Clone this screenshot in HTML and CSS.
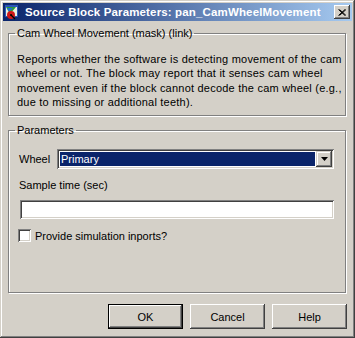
FILE: index.html
```html
<!DOCTYPE html>
<html>
<head>
<meta charset="utf-8">
<title>Source Block Parameters</title>
<link rel="stylesheet" href="styles.css">
</head>
<body>
<div class="window">
  <div class="titlebar">
    <svg class="app-icon" width="16" height="16" viewBox="0 0 16 16">
      <rect x="0.5" y="0.5" width="14" height="13" fill="#2a55b8" stroke="#0f2a6e"/>
      <rect x="2" y="3" width="11" height="9" fill="#e8f0e0"/>
      <polygon points="2,3 12,3 6,10" fill="#2e9a3a"/>
      <polygon points="3,4 9,4 5,8" fill="#1f6fd0"/>
      <circle cx="7" cy="11" r="4" fill="#d01818"/>
      <path d="M7 11 L11 15" stroke="#000" stroke-width="1.2"/>
      <circle cx="7" cy="11" r="1" fill="#000"/>
    </svg>
    <span class="title">Source Block Parameters: pan_CamWheelMovement</span>
    <button class="close" aria-label="Close">
      <svg width="8" height="7" viewBox="0 0 8 7"><path d="M0.5 0.5 L7 6.5 M1.5 0.5 L8 6.5 M7 0.5 L0.5 6.5 M8 0.5 L1.5 6.5" stroke="#000" stroke-width="1"/></svg>
    </button>
  </div>
  <div class="content">
    <fieldset class="group desc">
      <legend>Cam Wheel Movement (mask) (link)</legend>
      <p class="desc-text">Reports whether the software is detecting movement of the cam<br>wheel or not. The block may report that it senses cam wheel<br>movement even if the block cannot decode the cam wheel (e.g.,<br>due to missing or additional teeth).</p>
    </fieldset>
    <fieldset class="group params">
      <legend>Parameters</legend>
      <div class="wheel-row">
        <span class="wheel-label">Wheel</span>
        <div class="select">
          <span class="sel-text">Primary</span>
          <span class="arrow">
            <svg width="7" height="4" viewBox="0 0 7 4"><polygon points="0,0 7,0 3.5,4" fill="#000"/></svg>
          </span>
        </div>
      </div>
      <div class="field-label">Sample time (sec)</div>
      <div class="textbox"></div>
      <div class="check-row">
        <span class="checkbox"></span>
        <span class="check-label">Provide simulation inports?</span>
      </div>
    </fieldset>
    <div class="buttons">
      <button class="btn default">OK</button>
      <button class="btn">Cancel</button>
      <button class="btn">Help</button>
    </div>
  </div>
</div>
</body>
</html>
```
FILE: styles.css
```css
html, body {
  margin: 0;
  padding: 0;
  background: #d4d0c8;
}
body {
  font-family: "Liberation Sans", Arial, sans-serif;
  font-size: 11px;
  color: #000;
}
.window {
  width: 355px;
  height: 338px;
  box-sizing: border-box;
  padding: 3px;
  background: #d4d0c8;
  box-shadow: inset -1px -1px #404040, inset 1px 1px #d4d0c8, inset -2px -2px #808080, inset 2px 2px #fff;
  display: flex;
  flex-direction: column;
}
.titlebar {
  height: 18px;
  flex: none;
  display: flex;
  align-items: center;
  padding-left: 1px;
  background: linear-gradient(to right, #0a246a, #a6caf0);
}
.app-icon {
  flex: none;
  margin-right: 5px;
}
.title {
  color: #fff;
  font-weight: bold;
  font-size: 11.5px;
  letter-spacing: 0.15px;
  white-space: nowrap;
}
.close {
  margin-left: auto;
  margin-right: 2px;
  width: 16px;
  height: 14px;
  padding: 0;
  border: none;
  background: #d4d0c8;
  box-shadow: inset -1px -1px #404040, inset 1px 1px #fff, inset -2px -2px #808080;
  display: flex;
  align-items: center;
  justify-content: center;
}
.close svg {
  display: block;
  margin-left: -1px;
}
.content {
  flex: 1;
  display: flex;
  flex-direction: column;
  padding: 0 6px 0 5px;
}
.group {
  margin: 0;
  min-width: 0;
  border: 1px solid #808080;
  box-shadow: inset 1px 1px #fff, 1px 1px #fff;
}
.group legend {
  line-height: 13px;
  padding: 0 2px;
}
.desc {
  margin-top: 6px;
  padding: 12px 8px 6px 8px;
}
.desc legend {
  margin-left: -2px;
}
.desc-text {
  margin: 0;
  line-height: 14.3px;
  letter-spacing: 0.22px;
  white-space: nowrap;
}
.params {
  margin-top: 8px;
  padding: 12px 11px 50px 10px;
}
.params legend {
  margin-left: -4px;
}
.wheel-row {
  display: flex;
  align-items: center;
  height: 20px;
}
.wheel-label {
  width: 38px;
  flex: none;
}
.select {
  flex: 1;
  height: 20px;
  box-sizing: border-box;
  padding: 2px;
  background: #fff;
  box-shadow: inset 1px 1px #808080, inset -1px -1px #fff, inset 2px 2px #404040, inset -2px -2px #d4d0c8;
  display: flex;
}
.sel-text {
  flex: 1;
  margin: 1px;
  background: #0a246a;
  color: #fff;
  line-height: 14px;
  padding-left: 1px;
}
.arrow {
  width: 16px;
  height: 16px;
  flex: none;
  background: #d4d0c8;
  box-shadow: inset -1px -1px #404040, inset 1px 1px #d4d0c8, inset -2px -2px #808080, inset 2px 2px #fff;
  display: flex;
  align-items: center;
  justify-content: center;
}
.arrow svg {
  display: block;
}
.field-label {
  margin-top: 10px;
  line-height: 13px;
}
.textbox {
  margin-top: 8px;
  margin-left: 1px;
  height: 19px;
  background: #fff;
  box-shadow: inset 1px 1px #808080, inset -1px -1px #fff, inset 2px 2px #404040, inset -2px -2px #d4d0c8;
}
.check-row {
  margin-top: 10px;
  margin-left: -1px;
  display: flex;
  align-items: center;
  height: 13px;
}
.checkbox {
  width: 13px;
  height: 13px;
  flex: none;
  background: #fff;
  box-shadow: inset 1px 1px #808080, inset -1px -1px #fff, inset 2px 2px #404040, inset -2px -2px #d4d0c8;
  margin-right: 4px;
}
.buttons {
  margin-top: 11px;
  margin-right: -1px;
  display: flex;
  justify-content: flex-end;
  gap: 7px;
}
.btn {
  width: 75px;
  height: 25px;
  padding: 0;
  border: none;
  background: #d4d0c8;
  font-family: "Liberation Sans", Arial, sans-serif;
  font-size: 11px;
  color: #000;
  box-shadow: inset -1px -1px #404040, inset 1px 1px #fff, inset -2px -2px #808080, inset 2px 2px #d4d0c8;
}
.btn.default {
  box-shadow: inset 0 0 0 1px #000, inset -2px -2px #404040, inset 2px 2px #fff, inset -3px -3px #808080;
}
```
